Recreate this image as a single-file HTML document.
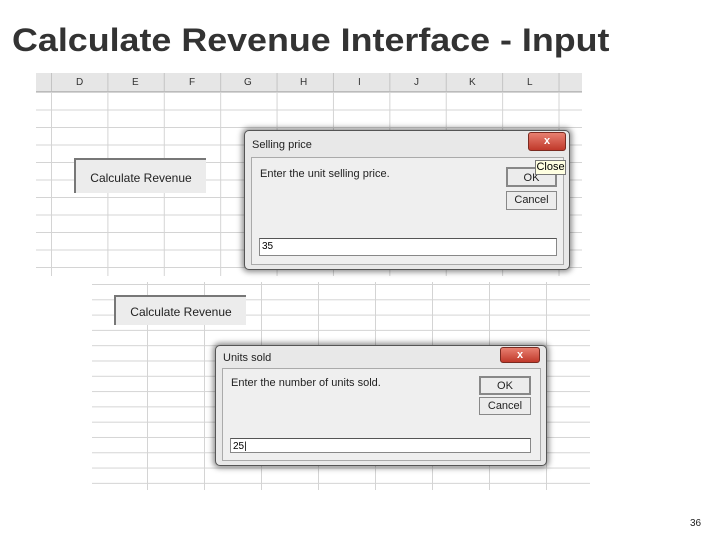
<!DOCTYPE html>
<html><head><style>
*{margin:0;padding:0;box-sizing:border-box}
body{width:720px;height:540px;background:#fff;position:relative;overflow:hidden;font-family:"Liberation Sans",sans-serif}
.abs{position:absolute}
h1{position:absolute;left:12px;top:22px;font-size:32px;font-weight:bold;color:#333;white-space:nowrap;transform:scaleX(1.12);transform-origin:0 0}
.sheet{position:absolute;background:#fff;overflow:hidden}
.btn{position:absolute;background:#ececec;border-top:2px solid #777;border-left:2px solid #777;font-size:12px;color:#222;text-align:center}
.dlg{position:absolute;background:#e8e8e8;border:1px solid #555;border-radius:5px;box-shadow:0 0 6px 2px rgba(0,0,0,.45)}
.inner{position:absolute;background:#efefef;border:1px solid #aaa}
.x{position:absolute;background:linear-gradient(#e88070,#c0392b);border:1px solid #7a2a20;border-radius:3px;color:#fff;font-size:11px;font-weight:bold;text-align:center;line-height:15px}
.wb{position:absolute;background:#ececec;border:1px solid #888;font-size:11px;text-align:center;color:#222}
.inp{position:absolute;background:#fff;border:1px solid #888;border-top-color:#555;font-size:10px;padding-left:2px;line-height:15px}
.t{position:absolute;font-size:11px;color:#222}
</style></head><body>
<h1>Calculate Revenue Interface - Input</h1>

<div class="sheet" style="left:36px;top:73px;width:546px;height:203px;
background-image:linear-gradient(#d4d4d4 1px,transparent 1px),linear-gradient(90deg,#d4d4d4 1px,transparent 1px);
background-size:100% 17.5px,56.4px 100%;background-position:0 19px,15px 0">
 <div class="abs" style="left:0;top:0;width:546px;height:19px;background:#e6e6e6;border-bottom:1px solid #bbb;background-image:linear-gradient(90deg,#c4c4c4 1px,transparent 1px);background-size:56.4px 100%;background-position:15px 0"></div>
 <div class="abs" style="top:4px;left:0;width:546px;font-size:10px;color:#333">
  <span class="abs" style="left:40px">D</span><span class="abs" style="left:96px">E</span><span class="abs" style="left:153px">F</span><span class="abs" style="left:208px">G</span><span class="abs" style="left:264px">H</span><span class="abs" style="left:322px">I</span><span class="abs" style="left:378px">J</span><span class="abs" style="left:433px">K</span><span class="abs" style="left:491px">L</span>
 </div>
</div>
<div class="btn" style="left:74px;top:158px;width:132px;height:35px;line-height:36px">Calculate Revenue</div>

<div class="dlg" style="left:244px;top:130px;width:326px;height:140px">
 <div class="t" style="left:7px;top:8px">Selling price</div>
 <div class="x" style="left:283px;top:1px;width:38px;height:19px;line-height:17px">x</div>
 <div class="inner" style="left:6px;top:26px;width:313px;height:108px"></div>
 <div class="t" style="left:15px;top:37px">Enter the unit selling price.</div>
 <div class="wb" style="left:261px;top:36px;width:51px;height:20px;line-height:18px;border-width:2px">OK</div>
 <div class="abs" style="left:290px;top:29px;width:31px;height:15px;background:#ffffe1;border:1px solid #777;font-size:11px;line-height:13px;text-align:center">Close</div>
 <div class="wb" style="left:261px;top:60px;width:51px;height:19px;line-height:17px">Cancel</div>
 <div class="inp" style="left:14px;top:107px;width:298px;height:18px">35</div>
</div>

<div class="sheet" style="left:92px;top:282px;width:498px;height:208px;
background-image:linear-gradient(#d4d4d4 1px,transparent 1px),linear-gradient(90deg,#d4d4d4 1px,transparent 1px);
background-size:100% 15.3px,57px 100%;background-position:0 2px,55px 0"></div>
<div class="btn" style="left:114px;top:295px;width:132px;height:30px;line-height:31px">Calculate Revenue</div>

<div class="dlg" style="left:215px;top:345px;width:332px;height:121px">
 <div class="t" style="left:7px;top:6px">Units sold</div>
 <div class="x" style="left:284px;top:1px;width:40px;height:16px;line-height:14px">x</div>
 <div class="inner" style="left:6px;top:22px;width:319px;height:93px"></div>
 <div class="t" style="left:15px;top:31px">Enter the number of units sold.</div>
 <div class="wb" style="left:263px;top:30px;width:52px;height:19px;line-height:16px;border-width:2px">OK</div>
 <div class="wb" style="left:263px;top:51px;width:52px;height:18px;line-height:16px">Cancel</div>
 <div class="inp" style="left:14px;top:92px;width:301px;height:15px">25|</div>
</div>

<div class="abs" style="left:690px;top:518px;font-size:10px;color:#222">36</div>
</body></html>
